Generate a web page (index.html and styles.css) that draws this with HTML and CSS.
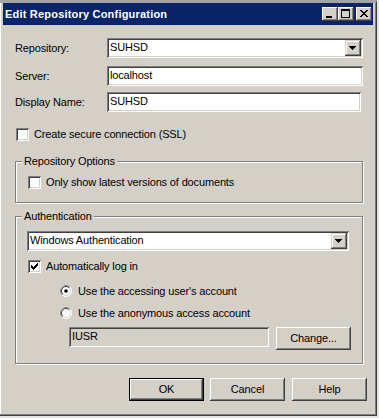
FILE: index.html
```html
<!DOCTYPE html>
<html>
<head>
<meta charset="utf-8">
<link rel="stylesheet" href="styles.css">
</head>
<body>
<div class="window">
  <div class="titlebar">
    <span class="title">Edit Repository Configuration</span>
    <div class="tbtns">
      <span class="tbtn"><svg width="16" height="14" shape-rendering="crispEdges"><rect x="4" y="9" width="6" height="2" fill="#000"/></svg></span>
      <span class="tbtn"><svg width="16" height="14" shape-rendering="crispEdges"><rect x="3" y="2" width="9" height="2" fill="#000"/><rect x="3" y="2" width="1" height="9" fill="#000"/><rect x="11" y="2" width="1" height="9" fill="#000"/><rect x="3" y="10" width="9" height="1" fill="#000"/></svg></span>
      <span class="tbtn close"><svg width="16" height="14" shape-rendering="crispEdges"><g fill="#000" transform="translate(4,3)"><rect x="0" y="0" width="2" height="1"/><rect x="6" y="0" width="2" height="1"/><rect x="1" y="1" width="2" height="1"/><rect x="5" y="1" width="2" height="1"/><rect x="2" y="2" width="4" height="1"/><rect x="3" y="3" width="2" height="1"/><rect x="2" y="4" width="4" height="1"/><rect x="1" y="5" width="2" height="1"/><rect x="5" y="5" width="2" height="1"/><rect x="0" y="6" width="2" height="1"/><rect x="6" y="6" width="2" height="1"/></g></svg></span>
    </div>
  </div>
  <div class="content">
    <div class="row row-repo">
      <span class="lbl">Repository:</span>
      <div class="combo combo-repo"><span class="val">SUHSD</span><span class="drop"><svg width="16" height="16" shape-rendering="crispEdges"><g fill="#000"><rect x="4" y="6" width="7" height="1"/><rect x="5" y="7" width="5" height="1"/><rect x="6" y="8" width="3" height="1"/><rect x="7" y="9" width="1" height="1"/></g></svg></span></div>
    </div>
    <div class="row row-server">
      <span class="lbl">Server:</span>
      <div class="edit edit-server">localhost</div>
    </div>
    <div class="row row-display">
      <span class="lbl">Display Name:</span>
      <div class="edit edit-display">SUHSD</div>
    </div>
    <div class="check check-ssl"><span class="cb"></span><span class="ctext">Create secure connection (SSL)</span></div>

    <div class="group group-repo">
      <span class="legend">Repository Options</span>
      <div class="check check-latest"><span class="cb"></span><span class="ctext">Only show latest versions of documents</span></div>
    </div>

    <div class="group group-auth">
      <span class="legend">Authentication</span>
      <div class="combo combo-auth"><span class="val">Windows Authentication</span><span class="drop"><svg width="16" height="16" shape-rendering="crispEdges"><g fill="#000"><rect x="4" y="6" width="7" height="1"/><rect x="5" y="7" width="5" height="1"/><rect x="6" y="8" width="3" height="1"/><rect x="7" y="9" width="1" height="1"/></g></svg></span></div>
      <div class="check check-auto"><span class="cb"><svg width="13" height="13" shape-rendering="crispEdges"><g fill="#000" transform="translate(3,3)"><rect x="6" y="0" width="1" height="1"/><rect x="5" y="1" width="2" height="1"/><rect x="0" y="2" width="1" height="1"/><rect x="4" y="2" width="3" height="1"/><rect x="0" y="3" width="2" height="1"/><rect x="3" y="3" width="3" height="1"/><rect x="0" y="4" width="5" height="1"/><rect x="1" y="5" width="3" height="1"/><rect x="2" y="6" width="1" height="1"/></g></svg></span><span class="ctext">Automatically log in</span></div>
      <div class="radio radio-1"><svg class="rb" width="12" height="12"><circle cx="6" cy="6" r="5.5" fill="#fff" stroke="#fff"/><path d="M2.1 9.9 A5.5 5.5 0 0 1 9.9 2.1" fill="none" stroke="#808080"/><circle cx="6" cy="6" r="4.5" fill="#fff" stroke="#d4d0c8"/><path d="M2.8 9.2 A4.5 4.5 0 0 1 9.2 2.8" fill="none" stroke="#404040"/><circle cx="6" cy="6" r="1.8" fill="#000"/></svg><span class="ctext">Use the accessing user's account</span></div>
      <div class="radio radio-2"><svg class="rb" width="12" height="12"><circle cx="6" cy="6" r="5.5" fill="#fff" stroke="#fff"/><path d="M2.1 9.9 A5.5 5.5 0 0 1 9.9 2.1" fill="none" stroke="#808080"/><circle cx="6" cy="6" r="4.5" fill="#fff" stroke="#d4d0c8"/><path d="M2.8 9.2 A4.5 4.5 0 0 1 9.2 2.8" fill="none" stroke="#404040"/></svg><span class="ctext">Use the anonymous access account</span></div>
      <div class="acct">
        <div class="edit edit-acct">IUSR</div>
        <button class="btn btn-change">Change...</button>
      </div>
    </div>

    <div class="buttons">
      <button class="btn btn-default">OK</button>
      <button class="btn btn-cancel">Cancel</button>
      <button class="btn btn-help">Help</button>
    </div>
  </div>
</div>
</body>
</html>
```
FILE: styles.css
```css
* { box-sizing: border-box; }
html, body { margin: 0; padding: 0; }
body {
  width: 379px;
  height: 418px;
  overflow: hidden;
  background: #e4e4e4;
  font: 11px/13px "Liberation Sans", Arial, sans-serif;
  letter-spacing: -0.15px;
  color: #000;
}
.window {
  width: 377px;
  height: 416px;
  background: #d4d0c8;
  border-top: 3px solid #a4a4a4;
  border-right: 1px solid #404040;
  border-bottom: 1px solid #404040;
  padding: 0 3px;
  box-shadow: inset -1px -1px 0 #808080, inset 1px 0 0 #fff;
}
.titlebar {
  height: 22px;
  background: #0a246a;
  display: flex;
  align-items: center;
  padding-left: 2px;
}
.title {
  color: #fff;
  font-weight: bold;
  font-size: 11px;
  letter-spacing: 0.2px;
}
.tbtns {
  margin-left: auto;
  margin-right: 1px;
  display: flex;
}
.tbtn {
  width: 16px;
  height: 14px;
  background: #d4d0c8;
  box-shadow: inset -1px -1px 0 #404040, inset 1px 1px 0 #fff, inset -2px -2px 0 #808080;
  display: block;
}
.tbtn svg { display: block; }
.tbtn.close { margin-left: 2px; }

.content {
  padding-left: 12px;
}
.row {
  display: flex;
  align-items: center;
}
.lbl { width: 92px; }
.row-repo { margin-top: 13px; }
.row-server { margin-top: 8px; }
.row-display { margin-top: 6px; }

.edit, .combo {
  height: 20px;
  background: #fff;
  box-shadow: inset 1px 1px 0 #808080, inset -1px -1px 0 #fff, inset 2px 2px 0 #404040, inset -2px -2px 0 #d4d0c8;
  padding: 3px 3px 0 3px;
  white-space: nowrap;
}
.combo {
  display: flex;
  align-items: flex-start;
}
.combo .val { flex: 1; }
.drop {
  width: 16px;
  height: 16px;
  margin-top: -1px;
  margin-right: -1px;
  background: #d4d0c8;
  box-shadow: inset -1px -1px 0 #404040, inset 1px 1px 0 #d4d0c8, inset -2px -2px 0 #808080, inset 2px 2px 0 #fff;
}
.drop svg { display: block; }
.combo-repo { width: 256px; }
.edit-server { width: 256px; }
.edit-display { width: 254px; }

.check, .radio {
  display: flex;
  align-items: center;
  height: 13px;
}
.cb {
  width: 13px;
  height: 13px;
  background: #fff;
  box-shadow: inset 1px 1px 0 #808080, inset -1px -1px 0 #fff, inset 2px 2px 0 #404040, inset -2px -2px 0 #d4d0c8;
  flex: none;
}
.cb svg { display: block; }
.ctext { margin-left: 5px; white-space: nowrap; }
.check-ssl { margin-top: 16px; margin-left: 1px; }

.group {
  position: relative;
  width: 348px;
  border: 1px solid #808080;
  box-shadow: 1px 1px 0 #fff, inset 1px 1px 0 #fff;
}
.legend {
  position: absolute;
  top: -7px;
  left: 6px;
  padding: 0 2px;
  background: #d4d0c8;
  white-space: nowrap;
}
.group-repo {
  margin-top: 20px;
  height: 42px;
  padding: 14px 0 0 12px;
}
.group-auth {
  margin-top: 13px;
  height: 148px;
  padding: 14px 0 0 11px;
}
.combo-auth { width: 322px; }
.check-auto { margin-top: 9px; margin-left: 1px; }
.radio { height: 12px; margin-left: 33px; }
.rb { display: block; flex: none; }
.radio .ctext { margin-left: 6px; }
.radio-1 { margin-top: 12px; }
.radio-2 { margin-top: 10px; }
.acct {
  display: flex;
  align-items: flex-start;
  margin-top: 8px;
  margin-left: 42px;
}
.edit-acct {
  width: 200px;
  background: #d4d0c8;
}
.btn {
  width: 75px;
  height: 23px;
  padding: 0;
  border: none;
  background: #d4d0c8;
  font: 11px/13px "Liberation Sans", Arial, sans-serif;
  letter-spacing: -0.15px;
  color: #000;
  box-shadow: inset -1px -1px 0 #404040, inset 1px 1px 0 #fff, inset -2px -2px 0 #808080;
}
.btn-change { margin-left: 7px; }
.buttons {
  display: flex;
  margin-top: 14px;
  padding-left: 114px;
}
.btn-default {
  border: 1px solid #000;
  box-shadow: inset -1px -1px 0 #404040, inset 1px 1px 0 #fff, inset -2px -2px 0 #808080;
}
.btn-cancel { margin-left: 6px; }
.btn-help { margin-left: 7px; }
```
